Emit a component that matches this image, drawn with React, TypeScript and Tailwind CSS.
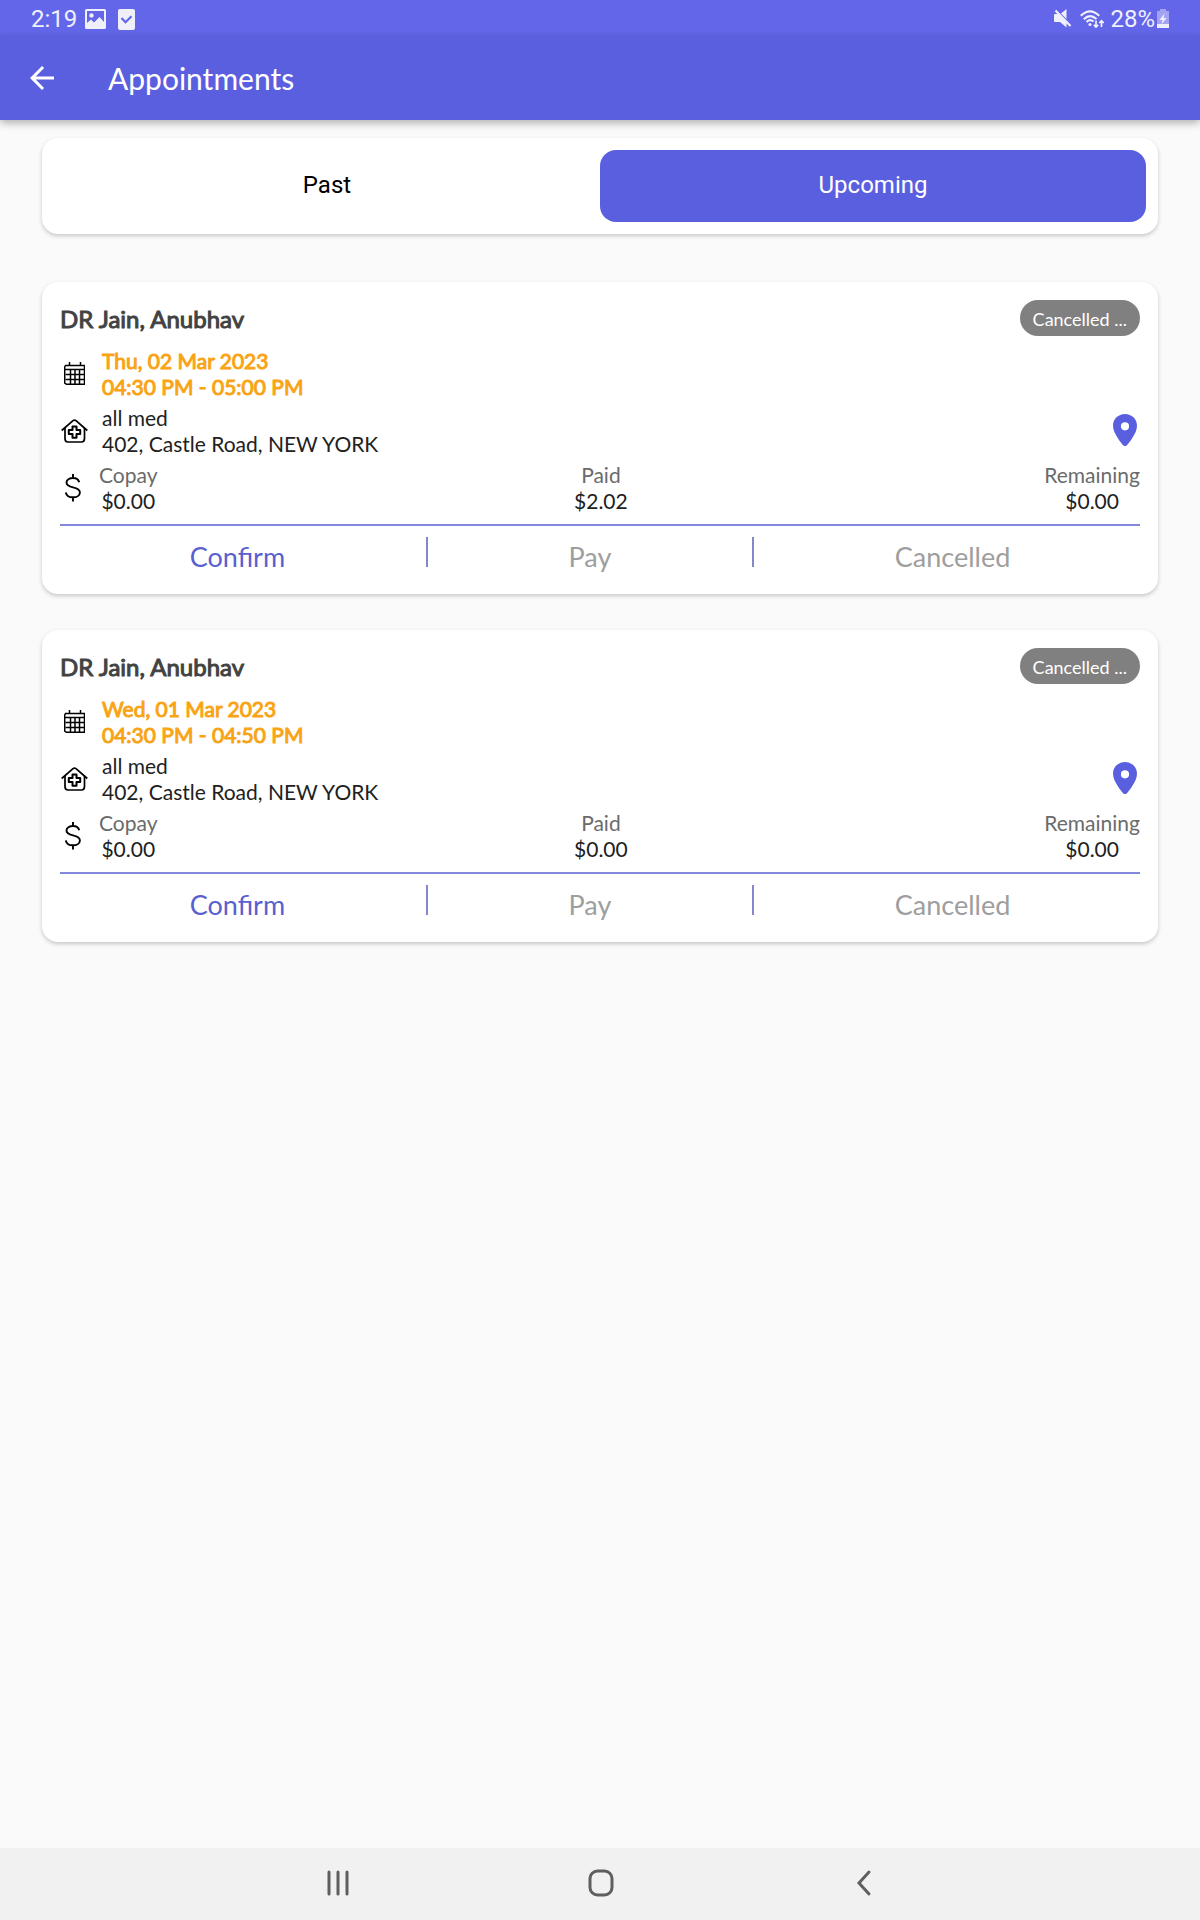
import { useState } from "react";

type Appointment = {
  doctor: string;
  date: string;
  time: string;
  clinic: string;
  address: string;
  copay: string;
  paid: string;
  remaining: string;
  status: string;
};

const appointments: Appointment[] = [
  {
    doctor: "DR Jain, Anubhav",
    date: "Thu, 02 Mar 2023",
    time: "04:30 PM - 05:00 PM",
    clinic: "all med",
    address: "402, Castle Road, NEW YORK",
    copay: "$0.00",
    paid: "$2.02",
    remaining: "$0.00",
    status: "Cancelled ...",
  },
  {
    doctor: "DR Jain, Anubhav",
    date: "Wed, 01 Mar 2023",
    time: "04:30 PM - 04:50 PM",
    clinic: "all med",
    address: "402, Castle Road, NEW YORK",
    copay: "$0.00",
    paid: "$0.00",
    remaining: "$0.00",
    status: "Cancelled ...",
  },
];

function PictureIcon() {
  return (
    <svg width="21" height="20" viewBox="0 0 21 20" aria-hidden="true">
      <path
        fill="currentColor"
        fillRule="evenodd"
        d="M1.5 0h18A1.5 1.5 0 0 1 21 1.500v17a1.500 1.500 0 0 1-1.500 1.500h-18A1.500 1.500 0 0 1 0 18.500v-17A1.500 1.500 0 0 1 1.500 0zM2 2v12l4-3.500 3 3L14.500 8l4.500 5V2zM6.500 4.200a2.200 2.200 0 1 1 0 4.400 2.200 2.200 0 0 1 0-4.400z"
      />
    </svg>
  );
}

function TaskIcon() {
  return (
    <svg width="17" height="21" viewBox="0 0 17 21" aria-hidden="true">
      <rect width="17" height="21" rx="2" fill="currentColor" />
      <path d="M3.500 9l4 4.200 6-6" fill="none" stroke="#6366e8" strokeWidth="2.200" />
    </svg>
  );
}

function MutedIcon() {
  return (
    <svg width="18" height="19" viewBox="0 0 18 19" aria-hidden="true">
      <path fill="currentColor" d="M0 6q0-1 1-1h3L12.500 13v5.500L6 13H1q-1 0-1-1zM7 4.500L12.500 0v10z" />
      <path d="M1.500 1.500l15 15.500" stroke="currentColor" strokeWidth="2.200" />
    </svg>
  );
}

function WifiIcon() {
  return (
    <svg width="24" height="19" viewBox="0 0 24 19" fill="none" stroke="currentColor" aria-hidden="true">
      <path d="M.800 5.800Q10-3 19.200 5.800M3.800 9.300Q10 3.200 16.500 9M6.500 12Q10 8.600 13.600 11.500" strokeWidth="2.100" />
      <circle cx="10" cy="14.500" r="1.500" fill="currentColor" stroke="none" />
      <path d="M16 10.500V17M13.800 14.800L16 17l2.200-2.200M21.500 17v-6M19.300 13l2.200-2.200 2.200 2.200" strokeWidth="1.700" />
    </svg>
  );
}

function BatteryIcon() {
  return (
    <svg width="12" height="19" viewBox="0 0 12 19" fill="currentColor" aria-hidden="true">
      <path opacity=".45" d="M3 0h6v2h3v13H0V2h3z" />
      <path d="M0 15h12v4H0zM7.500 4.500L2.500 11h3l-1 4.500L9.500 9h-3z" />
    </svg>
  );
}

function BackIcon() {
  return (
    <svg width="36" height="36" viewBox="0 0 24 24" fill="currentColor" aria-hidden="true">
      <path d="M20 11H7.830l5.590-5.590L12 4l-8 8 8 8 1.410-1.410L7.830 13H20z" />
    </svg>
  );
}

function CalendarIcon() {
  return (
    <svg width="21" height="24" viewBox="0 0 21 24" fill="none" stroke="black" strokeWidth="1.500" aria-hidden="true">
      <path d="M1.500 3.500h19v18.800H2.500L.700 21V5z" />
      <path d="M5.500 0v3M16.500 0v3M.700 7.500h19.800M1.500 12.500h19M1.500 17.500h19M6.500 7.500v14.800M11 7.500v14.800M15.500 7.500v14.800" />
    </svg>
  );
}

function ClinicIcon() {
  return (
    <svg width="27" height="24" viewBox="0 0 27 24" fill="none" stroke="black" strokeWidth="1.700" aria-hidden="true">
      <path d="M.700 11.500L12 1.700q1.500-1.200 3 0l11.300 9.800" />
      <path d="M4 9v10.500q0 3.500 3 3.500h13.500q3 0 3-3.500V9" />
      <path strokeWidth="2" d="M11.500 7.500h4v3.600h3.700v4h-3.700v3.600h-4v-3.600H7.800v-4h3.700z" strokeLinejoin="round" />
    </svg>
  );
}

function DollarIcon() {
  return (
    <svg width="16" height="28" viewBox="0 0 16 28" fill="none" stroke="black" strokeWidth="1.900" aria-hidden="true">
      <path d="M8 0v4M8 23v4.500M14.200 8.200C13.500 5.500 11.500 4 8 4S1.500 5.800 1.500 8.500c0 3 2.500 4 6.500 4.900s6.900 1.900 6.900 5c0 2.900-3 4.900-6.900 4.900s-6.700-1.800-7.200-5" />
    </svg>
  );
}

function PinIcon() {
  return (
    <svg width="24" height="32" viewBox="0 0 24 32" aria-hidden="true">
      <path
        fill="currentColor"
        fillRule="evenodd"
        d="M12 0c6.700 0 12 5 12 11.600 0 4.400-2 8.400-5 12.900-2 3-3.900 5.400-5.400 7q-1.600 1-3.200 0c-1.500-1.600-3.400-4-5.400-7-3-4.500-5-8.500-5-12.900C0 5 5.300 0 12 0zm0 8.200a4.100 4.100 0 1 0 0 8.200 4.100 4.100 0 0 0 0-8.200z"
      />
    </svg>
  );
}

function StatusBar() {
  return (
    <div className="flex h-9 items-center justify-between bg-[#6366e8] px-[31px] pt-0.5 font-['Roboto',sans-serif] text-2xl text-[#f0f0fd]">
      <div className="flex items-center">
        <span className="mr-2">2:19</span>
        <PictureIcon />
        <span className="ml-3">
          <TaskIcon />
        </span>
      </div>
      <div className="flex items-center">
        <span className="pb-0.5">
          <MutedIcon />
        </span>
        <span className="mr-1.5 ml-2">
          <WifiIcon />
        </span>
        <span className="mr-0.5">28%</span>
        <span className="pb-0.5">
          <BatteryIcon />
        </span>
      </div>
    </div>
  );
}

function Tabs() {
  const [active, setActive] = useState("Upcoming");
  return (
    <div role="tablist" className="flex rounded-2xl bg-white p-3 shadow-[0_2px_4px_rgba(0,0,0,0.2)]">
      {["Past", "Upcoming"].map((name) => (
        <button
          key={name}
          type="button"
          role="tab"
          aria-selected={active === name}
          onClick={() => setActive(name)}
          className={
            active === name
              ? "h-18 flex-1 rounded-2xl bg-[#5a5fdf] pb-0.5 font-['Roboto',sans-serif] text-2xl text-white"
              : "h-18 flex-1 rounded-2xl pb-0.5 font-['Roboto',sans-serif] text-2xl text-black"
          }
        >
          {name}
        </button>
      ))}
    </div>
  );
}

function Amount({ label, value }: { label: string; value: string }) {
  return (
    <div className="text-center">
      <dt className="text-[#6b6b6b]">{label}</dt>
      <dd>{value}</dd>
    </div>
  );
}

function AppointmentCard({ item }: { item: Appointment }) {
  return (
    <article className="rounded-2xl bg-white p-[18px] text-[21px] leading-[26px] text-[#212121] shadow-[0_2px_4px_rgba(0,0,0,0.2)]">
      <header className="flex items-center justify-between">
        <h2 className="pt-0.5 text-2xl text-[#424242] [-webkit-text-stroke:1px_#424242]">{item.doctor}</h2>
        <span className="flex h-9 items-center rounded-full bg-[#808080] px-[13px] pt-0.5 text-lg text-white">
          {item.status}
        </span>
      </header>
      <div className="mt-3 flex items-center">
        <span className="flex w-[42px] pl-1">
          <CalendarIcon />
        </span>
        <p className="text-[#f9a414] [-webkit-text-stroke:1px_#f9a414]">
          {item.date}
          <br />
          {item.time}
        </p>
      </div>
      <div className="mt-[5px] flex items-center">
        <span className="flex w-[42px] pl-px">
          <ClinicIcon />
        </span>
        <p className="flex-1">
          {item.clinic}
          <br />
          {item.address}
        </p>
        <button type="button" aria-label="Show on map" className="mr-[3px] pb-0.5 text-[#5a5fdf]">
          <PinIcon />
        </button>
      </div>
      <dl className="mt-[5px] flex items-center justify-between">
        <div className="flex items-center">
          <span className="flex w-[39px] pl-[5px]">
            <DollarIcon />
          </span>
          <Amount label="Copay" value={item.copay} />
        </div>
        <Amount label="Paid" value={item.paid} />
        <Amount label="Remaining" value={item.remaining} />
      </dl>
      <footer className="mt-2.5 flex h-[52px] items-center justify-evenly border-t-2 border-[#8488dc] pt-0.5 text-[27px]">
        <button type="button" className="pt-2.5 text-[#5a5fcf]">
          Confirm
        </button>
        <span className="mx-[11px] h-[30px] w-0.5 bg-[#8488c8]" />
        <button type="button" className="pt-2.5 text-[#9e9e9e]">
          Pay
        </button>
        <span className="mx-[11px] h-[30px] w-0.5 bg-[#8488c8]" />
        <button type="button" className="pt-2.5 text-[#9e9e9e]">
          Cancelled
        </button>
      </footer>
    </article>
  );
}

export default function App() {
  return (
    <div className="flex min-h-screen flex-col bg-[#fafafa] font-['Lato',sans-serif]">
      <StatusBar />
      <header className="flex h-21 items-center bg-[#5a5fdf] px-6 text-white shadow-[0_3px_8px_rgba(0,0,0,0.3)]">
        <button type="button" aria-label="Back">
          <BackIcon />
        </button>
        <h1 className="ml-12 text-[30px]">Appointments</h1>
      </header>
      <main className="flex-1 px-[42px] pt-[18px]">
        <Tabs />
        <section className="mt-12 flex flex-col gap-9" aria-label="Appointments">
          {appointments.map((item) => (
            <AppointmentCard key={item.date} item={item} />
          ))}
        </section>
      </main>
      <nav className="flex h-18 items-center justify-center gap-[231px] bg-[#f1f1f1] pb-0.5 pl-0.5 text-[#5f5f5f]">
        <button type="button" aria-label="Recent apps">
          <svg width="32" height="32" viewBox="0 0 32 32" stroke="currentColor" strokeWidth="3" strokeLinecap="round">
            <path d="M7 5v22M16 5v22M25 5v22" />
          </svg>
        </button>
        <button type="button" aria-label="Home">
          <svg width="32" height="32" viewBox="0 0 32 32" fill="none" stroke="currentColor" strokeWidth="3">
            <rect x="5" y="4" width="22" height="24" rx="7.500" />
          </svg>
        </button>
        <button type="button" aria-label="Back">
          <svg width="32" height="32" viewBox="0 0 32 32" fill="none" stroke="currentColor" strokeWidth="3" strokeLinecap="round">
            <path d="M21 5L11 16l10 11" />
          </svg>
        </button>
      </nav>
    </div>
  );
}
